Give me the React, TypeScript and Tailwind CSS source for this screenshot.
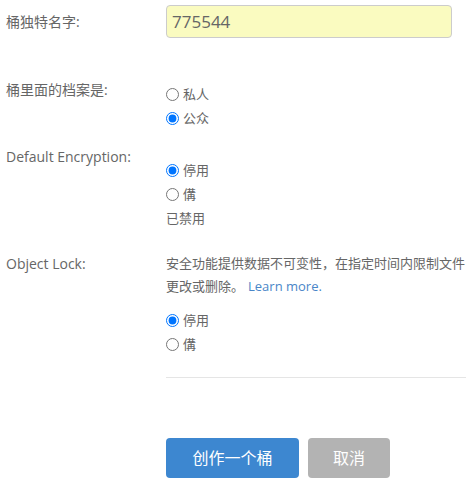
import React from "react";

const font = "font-['Open_Sans','Noto_Sans_CJK_SC',sans-serif]";

const Radio = ({ name, label, checked }: { name: string; label: string; checked?: boolean }) => (
  <label className="flex items-center h-[24px] gap-[4px]">
    <input type="radio" name={name} defaultChecked={checked} className="m-0 w-[13px] h-[13px]" />
    <span>{label}</span>
  </label>
);

export default function App() {
  return (
    <div className={`${font} w-[475px] h-[488px] bg-white text-[13px] text-[#666] pl-[6px] pt-[5px]`}>
      {/* bucket name */}
      <div className="flex items-center">
        <div className="w-[160px] text-[14px]">桶独特名字:</div>
        <input
          defaultValue="775544"
          className="w-[286px] h-[33px] rounded-[4px] border border-[#ccc] bg-[#fafbc0] px-[5px] text-[17px] text-[#666] outline-none"
        />
      </div>

      {/* access */}
      <div className="flex mt-[40px] leading-[24px]">
        <div className="w-[160px] text-[14px]">桶里面的档案是:</div>
        <div className="pt-[4px]">
          <Radio name="access" label="私人" />
          <Radio name="access" label="公众" checked />
        </div>
      </div>

      {/* encryption */}
      <div className="flex mt-[15px] leading-[24px]">
        <div className="w-[160px] text-[14px]">Default Encryption:</div>
        <div className="pt-[13px]">
          <Radio name="enc" label="停用" checked />
          <Radio name="enc" label="傋" />
          <div className="h-[24px]">已禁用</div>
        </div>
      </div>

      {/* object lock */}
      <div className="flex mt-[22px]">
        <div className="w-[160px] text-[14px] leading-[24px]">Object Lock:</div>
        <div className="w-[300px]">
          <p className="leading-[23px]">
            安全功能提供数据不可变性，在指定时间内限制文件更改或删除。
            <a href="#" className="ml-[4px] text-[#4a86c8]">Learn more.</a>
          </p>
          <div className="mt-[10px] leading-[24px]">
            <Radio name="lock" label="停用" checked />
            <Radio name="lock" label="傋" />
          </div>
          <div className="mt-[21px] border-t border-[#e5e5e5]" />
        </div>
      </div>

      <div className="flex gap-[9px] ml-[160px] mt-[60px]">
        <button className="w-[133px] h-[40px] rounded-[4px] bg-[#3d87d0] text-white text-[16px]">创作一个桶</button>
        <button className="w-[82px] h-[40px] rounded-[4px] bg-[#b3b3b3] text-white text-[16px]">取消</button>
      </div>
    </div>
  );
}
